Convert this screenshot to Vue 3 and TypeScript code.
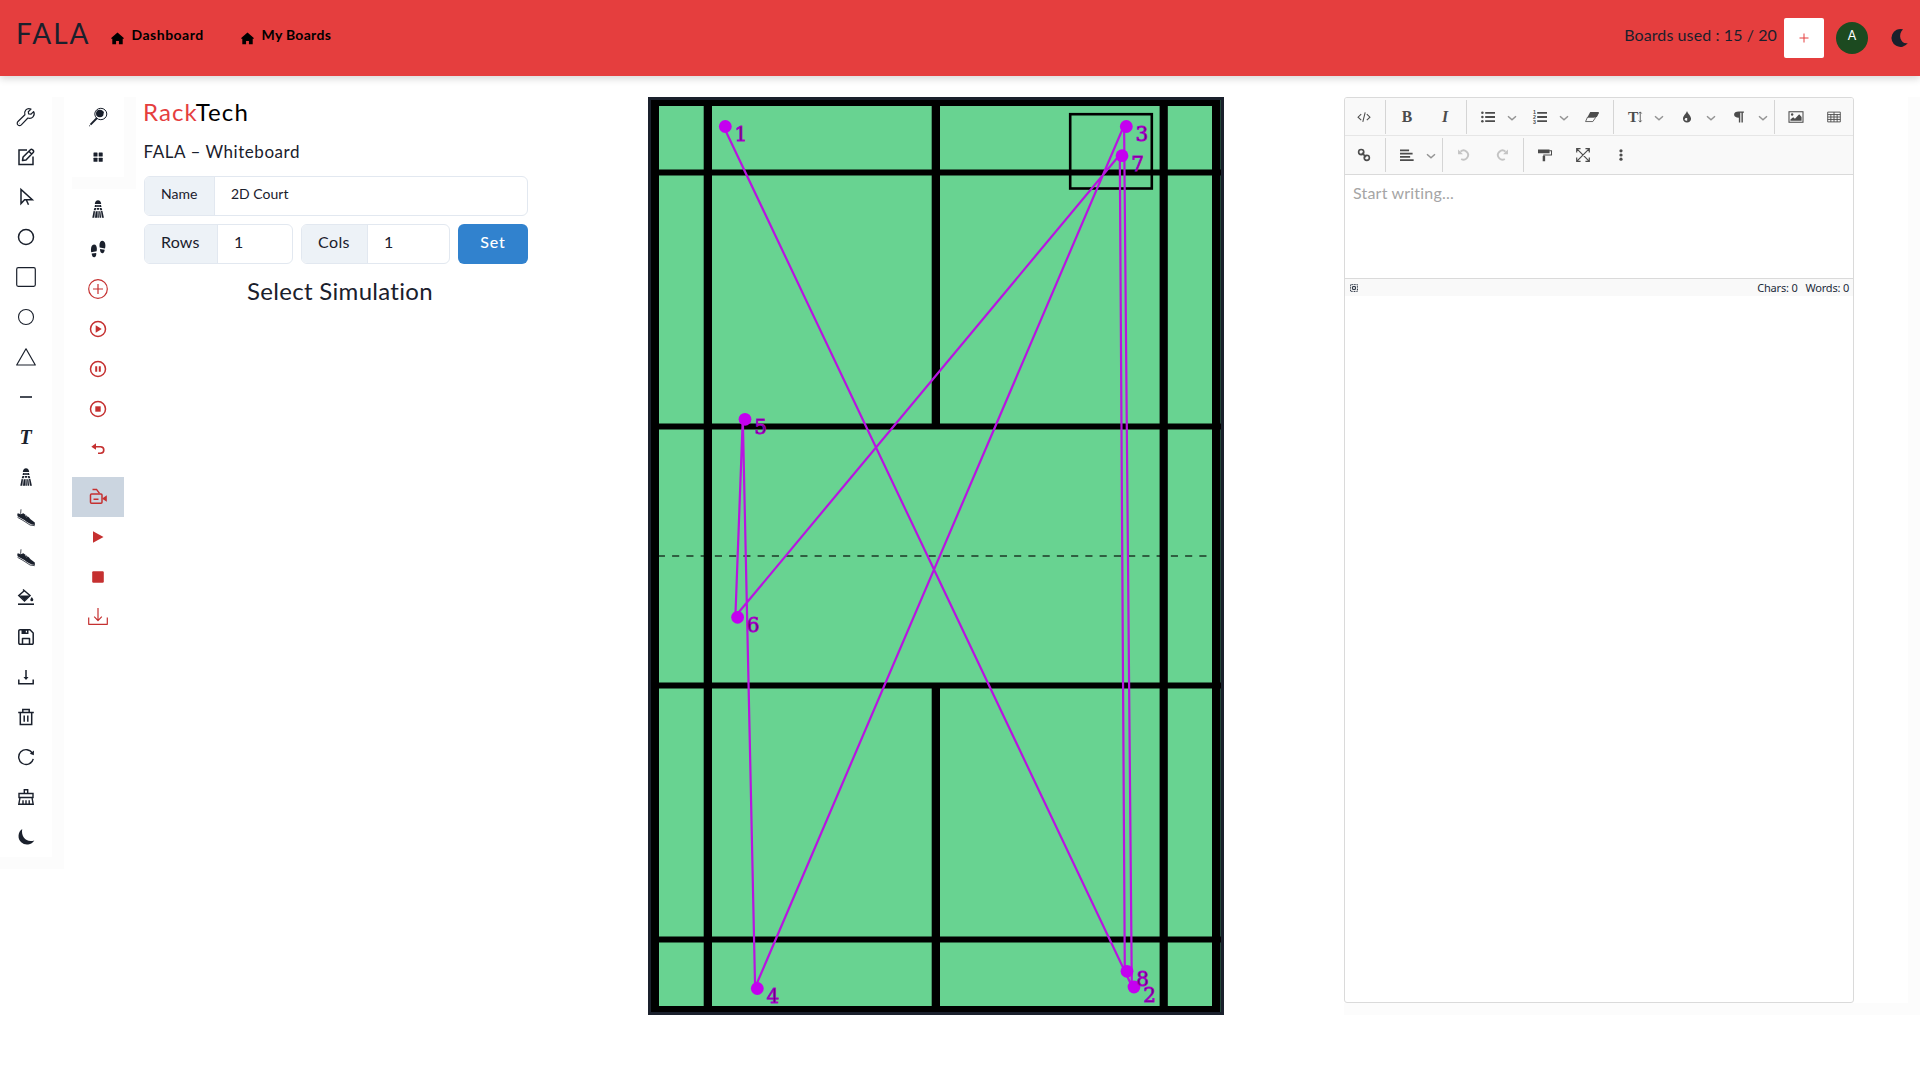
<script setup lang="ts">
import { h, type FunctionalComponent } from 'vue'

const shapes: Record<string, string> = {
  wrench:
    '<path fill="none" stroke="currentColor" stroke-width="1.2" stroke-linejoin="round" d="M17.6 4.6 14.9 7.2 12.6 6.8 12.3 4.7 15 2.1C13.2 1.2 11 1.6 9.700 3.100 8.600 4.400 8.300 6 8.900 7.700L2 14.500C1 15.500 1 17 1.900 17.900 2.900 18.800 4.300 18.800 5.300 17.800L11.900 11C13.700 11.700 15.800 11.200 17 9.800 18.300 8.400 18.600 6.400 17.600 4.600ZM3.500 16.300h.3"/>',
  edit:
    '<path fill="none" stroke="currentColor" stroke-width="1.5" d="M11 3H3v14.500h14V9.500"/><path fill="none" stroke="currentColor" stroke-width="1.5" stroke-linejoin="round" d="m6.500 13.500.6-3.500L14.400 2.700c.6-.6 1.500-.6 2.100 0l.7.7c.6.6.6 1.500 0 2.100L10 12.900ZM13.100 4.500l2.500 2.500"/>',
  cursor:
    '<path fill="none" stroke="currentColor" stroke-width="1.5" stroke-linejoin="miter" d="M5 2.500v14l3.600-3.800h7.700ZM10 12.300l2.500 5.500"/>',
  circleBold: '<circle cx="10" cy="10" r="7.500" fill="none" stroke="currentColor" stroke-width="1.500"/>',
  square: '<rect x=".7" y=".7" width="18.600" height="18.600" rx="1.500" fill="none" stroke="currentColor" stroke-width="1.200"/>',
  circle: '<circle cx="10" cy="10" r="7.500" fill="none" stroke="currentColor" stroke-width="1.100"/>',
  triangle: '<path d="M10 1.800 19.300 18H.7Z" fill="none" stroke="currentColor" stroke-width="1.200" stroke-linejoin="round"/>',
  minus: '<path d="M4 10h12" stroke="currentColor" stroke-width="1.600"/>',
  text: '<text x="9.500" y="16.500" text-anchor="middle" font-family="Liberation Serif, serif" font-weight="700" font-style="italic" font-size="20" fill="currentColor">T</text>',
  shuttle:
    '<g fill="currentColor"><path d="M6.800 5C7 2.600 8.200 1.200 10 1.200S13 2.600 13.200 5Z"/><path d="M7 6h1.800v2H6.600ZM9.200 6h1.600v2H9.200ZM11.200 6H13l.5 2h-2.300ZM6.400 9h1.800l-.5 2.200H5.700ZM8.800 9h2.400v1.800H8.800ZM11.800 9h1.800l.7 2.200h-2Z"/><path d="M5.600 12 7 12.200 6.300 18.800H4.300ZM7.700 12.200h1.500l-.2 6.600H7ZM9.600 12h.9l.4 6.800H9.400ZM11.100 12.200h1.300l.7 6.600h-1.500ZM13 12h1.400l1.500 6.800h-2Z"/></g>',
  shoe:
    '<g fill="currentColor"><path d="M1.800 6.300 4.800 7.300 7.300 6.200 12.800 10.200 14.500 12.300 18.800 15.500 18.900 18C15 17.700 11 15.600 8.400 13L2.300 9.700C1 9 1.100 7.200 1.800 6.300Z"/><path d="M4.600 6.800 5 2.300" stroke="currentColor" stroke-width=".8"/></g><path d="m1.500 10.300 5.500 3.100 7 4.600 4.800.7" fill="none" stroke="currentColor" stroke-width=".8"/><path d="m9 8.900 1.300-.6m.1 1.800 1.300-.6" stroke="#fff" stroke-width=".6"/>',
  bucket:
    '<path d="M2 17.200h16" stroke="currentColor" stroke-width="1.600"/><path d="M7 2.500 14 8.500 8.500 14 2.800 8.500 8 4" fill="none" stroke="currentColor" stroke-width="1.500"/><path d="M3.500 8.500h10L8.500 13.500Z" fill="currentColor"/><path d="M15.800 10c1 1.400 1.500 2.100 1.500 2.800a1.500 1.500 0 0 1-3 0c0-.7.500-1.400 1.500-2.800Z" fill="currentColor"/>',
  save:
    '<g fill="none" stroke="currentColor" stroke-width="1.500" stroke-linejoin="round"><path d="M2.800 4A1.200 1.200 0 0 1 4 2.800h10L17.200 6v10a1.200 1.200 0 0 1-1.200 1.200H4A1.200 1.200 0 0 1 2.800 16Z"/><path d="M6.500 17v-5.500h7V17"/></g><path fill="currentColor" d="M5.500 3h7v4h-7Z"/><path fill="#fff" d="M9.800 3.800h1.200V5.500H9.800Z"/>',
  download:
    '<path fill="none" stroke="currentColor" stroke-width="1.500" d="M2.800 12.500v4.200h14.400v-4.200M10 3v9"/><path fill="currentColor" d="M7.500 10h5L10 13Z"/>',
  trash:
    '<g fill="none" stroke="currentColor" stroke-width="1.500"><path d="M2.200 5.500h15.600M6.800 5V2.600h6.400V5M4.300 6v11.500h11.400V6M8.200 8.500v6.300M11.800 8.500v6.300"/></g>',
  reload:
    '<path fill="none" stroke="currentColor" stroke-width="1.400" d="M16.500 6.300A7.400 7.400 0 1 0 17.300 11.800"/><path fill="currentColor" d="m18 3.600-.2 4.600-4-1.400Z"/>',
  clear:
    '<g fill="none" stroke="currentColor" stroke-width="1.400"><path d="M8.300 6.500V2.800h3.400v3.700M3 10.500v-4h14v4ZM4 10.500l-1.200 6.800h14.400L16 10.500M7 17v-3.700M10 17v-3.700M13.200 17v-3.700"/></g>',
  moon: '<path fill="currentColor" d="M6.200 2.100A8.500 8.500 0 1 0 18.300 13.500C10.500 15.900 4.800 10.300 6.200 2.100Z"/>',
  crescent: '<path fill="currentColor" d="M13 1.300A9 9 0 1 0 17.900 15.100C11.500 17 6.900 7.500 13 1.300Z"/>',
  racket:
    '<ellipse cx="12.800" cy="7" rx="6" ry="5.700" fill="none" stroke="currentColor" stroke-width="1"/><circle cx="11.800" cy="6.500" r="3.800" fill="currentColor"/><circle cx="14.800" cy="5.300" r="1" fill="currentColor"/><path d="M9 11 2.500 17.600" stroke="currentColor" stroke-width="1.900"/><path d="M1.200 18.800h.9" stroke="currentColor"/>',
  grid: '<g fill="currentColor"><rect x="5.500" y="5.500" width="4" height="4" rx=".5"/><rect x="10.700" y="5.500" width="4" height="4" rx=".5"/><rect x="5.500" y="10.700" width="4" height="4" rx=".5"/><rect x="10.700" y="10.700" width="4" height="4" rx=".5"/></g>',
  steps:
    '<g fill="currentColor"><path d="M3.200 13.300C2.500 9.500 3.300 5.500 6 5.500S9.300 9 8.600 12.200ZM3.700 14.500l4.500-.6c.3 2.600-.4 4.300-2 4.400-1.500.1-2.300-1.400-2.500-3.800ZM11.700 8.500C11 5 11.900 1.700 14.500 1.700S18 5.800 17 9.400ZM12 10l4.700.7c-.3 2.400-1.100 3.700-2.500 3.500C12.600 14 12 12.300 12 10Z"/></g>',
  plusCircle: '<path fill="none" stroke="currentColor" stroke-width="1.200" d="M10 .7a9.300 9.300 0 1 1 0 18.600A9.300 9.300 0 0 1 10 .7ZM10 5v10M5 10h10"/>',
  playCircle: '<circle cx="10" cy="10" r="7.500" fill="none" stroke="currentColor" stroke-width="1.500"/><path fill="currentColor" d="M7.700 6.300v7.400l6-3.700Z"/>',
  pauseCircle: '<circle cx="10" cy="10" r="7.500" fill="none" stroke="currentColor" stroke-width="1.500"/><path fill="currentColor" d="M7.200 7.300h2v5.400h-2ZM10.800 7.300h2v5.400h-2Z"/>',
  stopCircle: '<circle cx="10" cy="10" r="7.500" fill="none" stroke="currentColor" stroke-width="1.500"/><path fill="currentColor" d="M7.300 7.300h5.400v5.400H7.300Z"/>',
  undo: '<path fill="none" stroke="currentColor" stroke-width="1.600" d="M5 7.700h7.500a3.300 3.300 0 0 1 0 6.600H10"/><path fill="currentColor" d="M3.300 7.700 8 4.300v6.400Z"/>',
  camera:
    '<g fill="none" stroke="currentColor" stroke-width="1.500"><rect x="2.500" y="7" width="11.500" height="9.200" rx="1"/><path d="M4.500 2.400h4l3 4M5.500 12.300h5"/></g><path fill="currentColor" d="M14.500 11.300 18.800 8.300v6.400L14.500 12Z"/>',
  play: '<path fill="currentColor" d="M5 4.300v11.400L15.500 10Z"/>',
  stop: '<rect x="4.200" y="4.200" width="11.600" height="11.600" rx="1.200" fill="currentColor"/>',
  downloadThin:
    '<path fill="none" stroke="currentColor" stroke-width="1.200" stroke-linejoin="round" d="M.7 10.500v6.800h18.600v-6.800M10 1v12.500M6.200 9.700l3.800 3.900 3.800-3.900"/>',
  home: '<path fill="currentColor" d="M10 .8.300 9.300c-.4.500-.1 1 .5 1H2V19h5.800v-5.300h4.400V19H18v-8.700h1.200c.6 0 .9-.5.5-1Z"/>',
  code: '<path fill="none" stroke="currentColor" stroke-width="1.500" d="M6 6 1.500 10.300 6 14.500M14 6l4.500 4.300L14 14.500M11.700 3.300 8.300 17"/>',
  bold: '<text x="10" y="17" text-anchor="middle" font-family="Liberation Serif, serif" font-weight="700" font-size="22.500" fill="currentColor">B</text>',
  italic: '<text x="10" y="17" text-anchor="middle" font-family="Liberation Serif, serif" font-weight="700" font-style="italic" font-size="22.500" fill="currentColor">I</text>',
  list: '<g fill="currentColor"><circle cx="2" cy="4" r="1.800"/><circle cx="2" cy="10" r="1.800"/><circle cx="2" cy="16" r="1.800"/><path d="M6 2.700h14v2.600H6ZM6 8.700h14v2.600H6ZM6 14.700h14v2.600H6Z"/></g>',
  ordered:
    '<path fill="currentColor" d="M6 2.700h14v2.600H6ZM6 8.700h14v2.600H6ZM6 14.700h14v2.600H6Z"/><g font-family="Liberation Sans, sans-serif" font-weight="700" font-size="7.500" fill="currentColor"><text x="0" y="6">1</text><text x="0" y="12.800">2</text><text x="0" y="19.500">3</text></g>',
  eraser: '<path fill="currentColor" d="M7.500 3H20l-3 7H3.700Z"/><path fill="none" stroke="currentColor" stroke-width="1.200" d="M3.700 10 .8 16.500h10.400L19.400 4.500M14 10.500H3.600"/>',
  textSize:
    '<text x="0" y="17" font-family="Liberation Serif, serif" font-weight="700" font-size="22" fill="currentColor">T</text><path fill="none" stroke="currentColor" stroke-width="1.200" d="M17.500 3v14M15.500 5l2-2.300 2 2.300M15.500 15l2 2.300 2-2.300"/>',
  drop: '<path fill="currentColor" d="M10 1.500c1.200 4 5.800 7 5.800 11A5.600 5.600 0 0 1 10 18a5.600 5.600 0 0 1-5.800-5.500c0-4 4.600-7 5.800-11Z"/><path fill="#f9f9f9" d="M8.700 11.500h1.600v3.700H8.700a1.800 1.800 0 0 1 0-3.700Z"/>',
  para: '<path fill="currentColor" d="M9.500 2H17v2h-1.500v14h-2V4h-1.700v14h-2v-7C5.500 11 3 9.500 3 6.500S5.500 2 9.500 2Z"/>',
  image:
    '<rect x="0" y="2.500" width="20" height="15" fill="none" stroke="currentColor" stroke-width="1.500"/><circle cx="4.500" cy="6.500" r="1.700" fill="currentColor"/><path fill="currentColor" d="M2 15.500v-2l4-3 2.500 2 6-6.500L18 10v5.500Z"/>',
  table: '<path fill="none" stroke="currentColor" stroke-width="1.300" d="M1 3h18v14H1ZM1 6.500h18M1 10h18M1 13.500h18M5.500 6v11M10 3v14M14.500 6v11"/>',
  link: '<g fill="none" stroke="currentColor" stroke-width="2.300"><circle cx="6" cy="5.800" r="3.700"/><circle cx="14" cy="14" r="3.700"/><path d="m7 7 6 6"/></g>',
  align: '<path fill="currentColor" d="M0 2h13v2.500H0ZM0 6.700h18v2.500H0ZM0 11.400h14.500v2.500H0ZM0 16h19.500v2.500H0Z"/>',
  back: '<path fill="none" stroke="currentColor" stroke-width="2.700" d="M5 5.200A6.500 6.500 0 1 1 6 15.700"/><path fill="currentColor" d="M1.500 2v7h7Z"/>',
  forward: '<path fill="none" stroke="currentColor" stroke-width="2.700" d="M15 5.200A6.500 6.500 0 1 0 14 15.700"/><path fill="currentColor" d="M18.500 2v7h-7Z"/>',
  roller: '<path fill="currentColor" d="M0 2h16.500v5.500H0ZM6.700 11.500h3.500V19H6.700Z"/><path fill="none" stroke="currentColor" stroke-width="1.500" d="M16 4h3.300v6H8.400v3"/>',
  full: '<path fill="none" stroke="currentColor" stroke-width="1.700" d="m1 1 18 18M19 1 1 19M1 6.500V1h5.500M13.500 1H19v5.500M19 13.500V19h-5.500M6.500 19H1v-5.500"/>',
  dots: '<g fill="currentColor"><circle cx="10" cy="4" r="2.300"/><circle cx="10" cy="10" r="2.300"/><circle cx="10" cy="16" r="2.300"/></g>',
  chevron: '<path fill="none" stroke="currentColor" stroke-width="3" d="m2 6.500 8 7 8-7"/>',
  selectAll:
    '<path fill="none" stroke="currentColor" stroke-width="2.500" stroke-dasharray="2.500 1.500" d="M1.500 1.500h17v17h-17Z"/><path fill="none" stroke="currentColor" stroke-width="2.500" d="M6.500 6.500h7v7h-7Z"/>',
}

const Icon: FunctionalComponent<{ name: string; size?: number }> = (p) =>
  h('svg', {
    width: p.size ?? 20,
    height: p.size ?? 20,
    viewBox: '0 0 20 20',
    style: 'display:block;overflow:visible;flex:none',
    innerHTML: shapes[p.name],
  })
Icon.props = ['name', 'size']

const tools = [
  'wrench', 'edit', 'cursor', 'circleBold', 'square', 'circle', 'triangle', 'minus', 'text',
  'shuttle', 'shoe', 'shoe', 'bucket', 'save', 'download', 'trash', 'reload', 'clear', 'moon',
]
const pickers = ['racket', 'grid']
const actions = ['shuttle', 'steps', 'plusCircle', 'playCircle', 'pauseCircle', 'stopCircle', 'undo']
const recording = ['camera', 'play', 'stop', 'downloadThin']

const rowOne = ['code', '|', 'bold', 'italic', '|', 'list', 'v', 'ordered', 'v', 'eraser', '|', 'textSize', 'v', 'drop', 'v', 'para', 'v', '|', 'image', 'table']
const rowTwo = ['link', '|', 'align', 'v', '|', 'back', 'forward', '|', 'roller', 'full', 'dots']

interface Mark { n: number; x: number; y: number }
const marks: Mark[] = [
  { n: 1, x: 77.3, y: 29.5 },
  { n: 2, x: 486, y: 890 },
  { n: 3, x: 478.3, y: 29.5 },
  { n: 4, x: 109.3, y: 891.5 },
  { n: 5, x: 97, y: 322.3 },
  { n: 6, x: 89.6, y: 520.3 },
  { n: 7, x: 474, y: 58.7 },
  { n: 8, x: 479, y: 874.3 },
]
const path = marks.map((m) => `${m.x - 2.200},${m.y - 1}`).join(' ')
</script>

<template>
  <div class="page">
    <header class="top">
      <div class="brand">FALA</div>
      <a class="nav first"><Icon name="home" :size="13" /><span>Dashboard</span></a>
      <a class="nav second"><Icon name="home" :size="13" /><span>My Boards</span></a>
      <div class="used">Boards used : 15 / 20</div>
      <button class="add"><svg width="10" height="10" viewBox="0 0 10 10"><path d="M5 .5v9M.5 5h9" stroke="#e53e3e" stroke-width="1" /></svg></button>
      <div class="avatar">A</div>
      <div class="mode"><Icon name="crescent" /></div>
    </header>

    <main class="body">
      <aside class="rail main-rail">
        <div v-for="(t, i) in tools" :key="i" class="tool"><Icon :name="t" /></div>
      </aside>

      <div class="second-rail">
        <div class="rail picks">
          <div v-for="t in pickers" :key="t" class="tool"><Icon :name="t" /></div>
        </div>
        <div v-for="(t, i) in actions" :key="t" class="tool" :class="{ red: i > 1 }"><Icon :name="t" /></div>
        <div class="record">
          <div v-for="t in recording" :key="t" class="tool red" :class="{ active: t === 'camera' }"><Icon :name="t" /></div>
        </div>
      </div>

      <section class="panel">
        <h1><span>Rack</span>Tech</h1>
        <h2>FALA – Whiteboard</h2>
        <div class="field name"><label>Name</label><div class="value">2D Court</div></div>
        <div class="row">
          <div class="field rows"><label>Rows</label><div class="value">1</div></div>
          <div class="field cols"><label>Cols</label><div class="value">1</div></div>
          <button class="set">Set</button>
        </div>
        <h3>Select Simulation</h3>
      </section>

      <svg class="court" width="576" height="918" viewBox="0 0 576 918">
        <rect width="576" height="918" fill="#1a202c" />
        <rect x="3" y="3" width="569" height="912" fill="#68d391" />
        <rect x="572" y="3" width="1" height="912" fill="#23473a" />
        <g fill="#000">
          <rect x="3" y="3" width="569" height="6" />
          <rect x="3" y="909" width="569" height="6" />
          <rect x="3" y="3" width="8" height="912" />
          <rect x="564" y="3" width="8" height="912" />
          <rect x="55.700" y="3" width="8.300" height="912" />
          <rect x="511.600" y="3" width="8.200" height="912" />
          <rect x="3" y="72.500" width="570" height="6" />
          <rect x="3" y="326.500" width="570" height="6" />
          <rect x="3" y="585.500" width="570" height="6" />
          <rect x="3" y="839.500" width="570" height="6" />
          <rect x="283.700" y="3" width="8.300" height="324" />
          <rect x="283.700" y="588" width="8.300" height="324" />
        </g>
        <path d="M9.850 459H564" stroke="#000" stroke-opacity=".55" stroke-width="2" stroke-dasharray="7.125 7.125" />
        <rect x="422.200" y="17.200" width="81.600" height="74.300" fill="none" stroke="#000" stroke-width="2.600" />
        <polyline :points="path" fill="none" stroke="#b815e0" stroke-width="2.200" />
        <g v-for="m in marks" :key="m.n">
          <circle :cx="m.x" :cy="m.y" r="6.400" fill="#c400f0" />
          <text :x="m.x + 9.200" :y="m.y + 14.900" class="mark">{{ m.n }}</text>
        </g>
      </svg>

      <section class="editor-wrap">
        <div class="editor">
          <div class="bar">
            <template v-for="(t, i) in rowOne" :key="i">
              <i v-if="t === '|'" class="sep" />
              <div v-else-if="t === 'v'" class="drop"><Icon name="chevron" :size="10" /></div>
              <div v-else class="btn"><Icon :name="t" :size="14" /></div>
            </template>
          </div>
          <div class="bar lower">
            <template v-for="(t, i) in rowTwo" :key="i">
              <i v-if="t === '|'" class="sep" />
              <div v-else-if="t === 'v'" class="drop"><Icon name="chevron" :size="10" /></div>
              <div v-else class="btn" :class="{ off: t === 'back' || t === 'forward' }"><Icon :name="t" :size="14" /></div>
            </template>
          </div>
          <div class="area">Start writing...</div>
          <div class="status">
            <Icon name="selectAll" :size="8" />
            <span class="chars">Chars: 0</span><span>Words: 0</span>
          </div>
        </div>
      </section>
    </main>
  </div>
</template>

<style>
body { margin: 0; background: #fff; }
</style>

<style scoped>
* { box-sizing: border-box; }
.page { width: 1920px; height: 1080px; overflow: hidden; font-family: Lato, sans-serif; font-variant-ligatures: none; color: #1a202c; background: #fff; }
.top { height: 76px; background: #e53e3e; display: flex; align-items: center; position: relative; box-shadow: 0 3px 7px rgba(0, 0, 0, .15); white-space: nowrap; }
.brand { width: 93px; padding-left: 16px; font-size: 28px; line-height: 36px; margin-top: -11px; letter-spacing: 2px; }
.nav { display: flex; align-items: center; gap: 8px; color: #000; font-size: 14px; line-height: 20px; font-weight: 700; }
.nav span { margin-top: -6px; }
.first { width: 130px; margin-left: 17.500px; letter-spacing: .5px; }
.second { letter-spacing: .3px; }
.used { margin-left: auto; margin-right: 7px; font-size: 16px; line-height: 24px; letter-spacing: .1px; margin-top: -6px; }
.add { width: 40px; height: 40px; border: 0; border-radius: 2px; background: #fff; padding: 0; display: grid; place-items: center; }
.avatar { width: 32px; height: 32px; margin-left: 12px; border-radius: 50%; background: #1c4a20; color: #fff; font-size: 12.500px; line-height: 28px; text-align: center; }
.mode { width: 20px; margin: 0 10px 0 22px; }
.body { display: flex; padding-top: 21px; }
.rail { border-right: 12px solid #fcfcfc; border-bottom: 12px solid #fcfcfc; }
.main-rail { width: 64px; height: 772px; }
.tool { width: 52px; height: 40px; display: grid; place-items: center; }
.second-rail { width: 64px; margin-left: 8px; }
.picks { width: 64px; height: 92px; }
.record { margin-top: 8px; }
.red { color: #c53030; }
.active { background: #cbd5e0; }
.panel { width: 384px; margin-left: 8px; white-space: nowrap; }
h1, h2, h3 { margin: 0; font-weight: 400; }
h1 { font-size: 24px; line-height: 30px; color: #000; letter-spacing: 1.100px; text-indent: -1px; }
h1 span { color: #e53e3e; }
h2 { font-size: 17px; line-height: 24px; margin: 13px 0 12px; letter-spacing: .55px; text-indent: -.5px; }
.field { height: 40px; display: flex; border: 1px solid #e2e8f0; border-radius: 6px; overflow: hidden; font-size: 16px; line-height: 33px; }
.field label { background: #edf2f7; border-right: 1px solid #e2e8f0; padding-left: 16px; flex: none; }
.value { padding-left: 16px; }
.name { font-size: 14px; line-height: 34px; }
.name label { width: 70px; }
.row { display: flex; gap: 8px; margin-top: 8px; }
.rows { width: 149px; letter-spacing: .2px; }
.rows label { width: 73px; }
.cols { width: 149px; letter-spacing: .4px; }
.cols label { width: 66px; }
.set { flex: none; width: 70px; height: 40px; border: 0; border-radius: 6px; background: #3182ce; color: #fff; font: 500 16px/33px Lato, sans-serif; letter-spacing: .8px; padding: 0 0 6px; }
h3 { font-size: 24px; line-height: 32px; margin: 11px 0 0 8px; text-align: center; letter-spacing: .3px; }
.court { display: block; margin-left: 120px; flex: none; }
.mark { font-family: "DejaVu Serif", serif; font-size: 20px; fill: #4d0060; stroke: #a900cc; stroke-width: .9px; }
.editor-wrap { width: 576px; height: 918px; margin-left: 120px; border-right: 12px solid #fcfcfc; border-bottom: 12px solid #fcfcfc; }
.editor { width: 510px; height: 906px; border: 1px solid #dadada; border-radius: 3px; overflow: hidden; color: #4c4c4c; }
.bar { height: 38px; display: flex; background: #f9f9f9; border-bottom: 1px solid #e6e6e6; }
.lower { height: 39px; border-bottom-color: #dadada; }
.btn { width: 38px; display: grid; place-items: center; }
.off { opacity: .3; }
.drop { width: 14px; padding-top: 15px; color: #949494; }
.sep { width: 1px; height: 34px; margin: 2px; background: #d5d5d5; }
.area { height: 104px; padding: 7px 8px; font-size: 16px; line-height: 22px; color: #a5a5a5; border-bottom: 1px solid #dadada; letter-spacing: .2px; }
.status { height: 17px; background: #f9f9f9; display: flex; align-items: center; padding: 0 4px 0 5px; font: 11px/16px "Noto Sans", sans-serif; letter-spacing: -.2px; color: #222b3a; }
.chars { margin: 0 8px 0 auto; }
</style>
